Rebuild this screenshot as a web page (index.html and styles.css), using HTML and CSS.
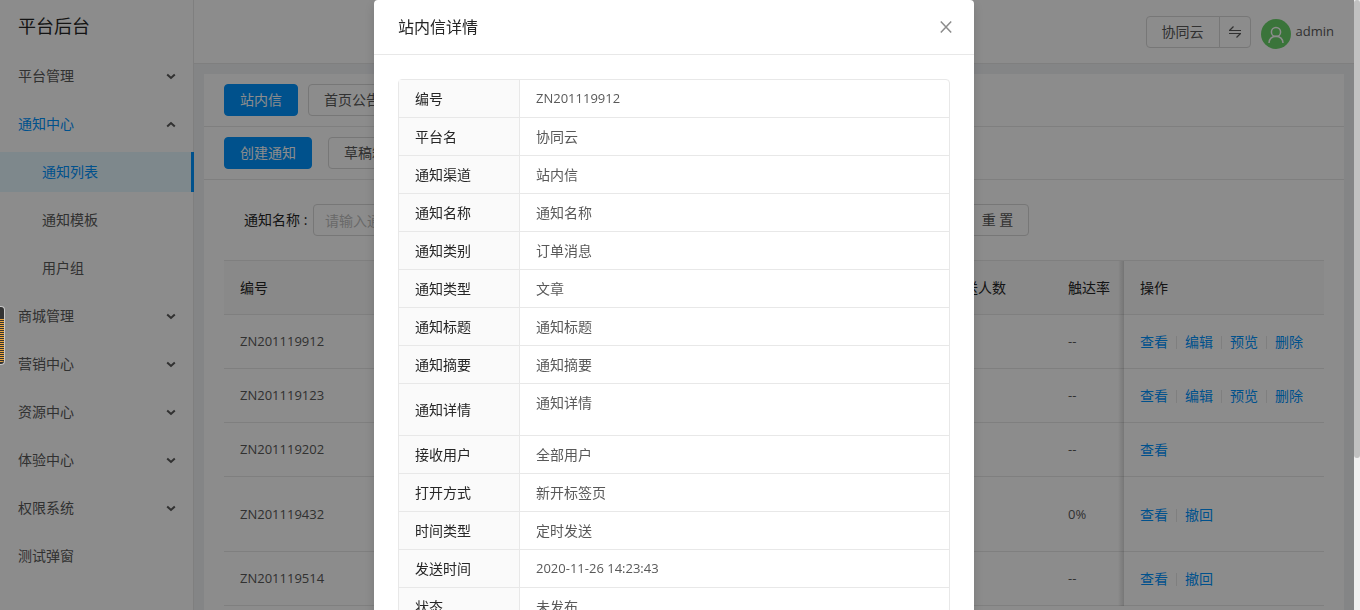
FILE: index.html
```html
<!DOCTYPE html>
<html lang="zh-CN">
<head>
  <meta charset="UTF-8" />
  <meta name="viewport" content="width=device-width, initial-scale=1" />
  <title>平台后台 - 通知列表</title>
  <link rel="stylesheet" href="styles.css">
</head>
<body>

  <div class="app">
    <aside class="sidebar">
      <h1 class="logo">平台后台</h1>
      <nav class="menu">
        <a class="menu-item" href="#">平台管理<svg class="arrow" viewBox="0 0 10 7"><path d="M1.200 1.500L5 5l3.800-3.500" /></svg></a>
        <a class="menu-item open" href="#">通知中心<svg class="arrow up" viewBox="0 0 10 7"><path d="M1.200 1.500L5 5l3.800-3.500" /></svg></a>
        <a class="menu-item sub selected" href="#">通知列表</a>
        <a class="menu-item sub" href="#">通知模板</a>
        <a class="menu-item sub" href="#">用户组</a>
        <a class="menu-item" href="#">商城管理<svg class="arrow" viewBox="0 0 10 7"><path d="M1.200 1.500L5 5l3.800-3.500" /></svg></a>
        <a class="menu-item" href="#">营销中心<svg class="arrow" viewBox="0 0 10 7"><path d="M1.200 1.500L5 5l3.800-3.500" /></svg></a>
        <a class="menu-item" href="#">资源中心<svg class="arrow" viewBox="0 0 10 7"><path d="M1.200 1.500L5 5l3.800-3.500" /></svg></a>
        <a class="menu-item" href="#">体验中心<svg class="arrow" viewBox="0 0 10 7"><path d="M1.200 1.500L5 5l3.800-3.500" /></svg></a>
        <a class="menu-item" href="#">权限系统<svg class="arrow" viewBox="0 0 10 7"><path d="M1.200 1.500L5 5l3.800-3.500" /></svg></a>
        <a class="menu-item" href="#">测试弹窗</a>
      </nav>
    </aside>

    <div class="main">
      <header class="header">
        <div class="btn-group">
          <button class="btn">协同云</button>
          <button class="btn icon-btn" aria-label="切换平台">
            <svg width="14" height="14" viewBox="0 0 14 14"><path d="M1 5.500h12M1.500 5.500l4-4M1 8.500h12M12.500 8.500l-4 4" /></svg>
          </button>
        </div>
        <div class="profile">
          <svg class="avatar" viewBox="0 0 30 30">
            <circle class="avatar-bg" cx="15" cy="15" r="15" />
            <circle cx="15" cy="13" r="4.600" />
            <path d="M8 24c0-4 3-6.800 7-6.800s7 2.800 7 6.800" />
          </svg>
          <span class="latin">admin</span>
        </div>
      </header>

      <div class="panel">
        <div class="toolbar tabs">
          <button class="btn primary">站内信</button>
          <button class="btn">首页公告</button>
        </div>
        <div class="toolbar actions">
          <button class="btn primary">创建通知</button>
          <button class="btn">草稿箱</button>
        </div>

        <form class="filter">
          <div class="field">
            <label for="name">通知名称 :</label>
            <input id="name" type="text" placeholder="请输入通知名称" />
          </div>
          <div class="field">
            <label for="type">通知类型 :</label>
            <select id="type"><option>全部</option></select>
          </div>
          <div class="filter-btns">
            <button class="btn primary" type="button">查 询</button>
            <button class="btn" type="reset">重 置</button>
          </div>
        </form>

        <table class="list">
          <colgroup>
            <col class="col-id"><col><col class="col-count"><col class="col-rate"><col class="col-ops">
          </colgroup>
          <thead>
            <tr><th>编号</th><th></th><th>发送人数</th><th>触达率</th><th class="fixed">操作</th></tr>
          </thead>
          <tbody>
            <tr>
              <td class="latin">ZN201119912</td><td></td><td></td><td class="latin">--</td>
              <td class="fixed"><a href="#">查看</a><a href="#">编辑</a><a href="#">预览</a><a href="#">删除</a></td>
            </tr>
            <tr>
              <td class="latin">ZN201119123</td><td></td><td></td><td class="latin">--</td>
              <td class="fixed"><a href="#">查看</a><a href="#">编辑</a><a href="#">预览</a><a href="#">删除</a></td>
            </tr>
            <tr>
              <td class="latin">ZN201119202</td><td></td><td></td><td class="latin">--</td>
              <td class="fixed"><a href="#">查看</a></td>
            </tr>
            <tr class="two-lines">
              <td class="latin">ZN201119432</td><td></td><td></td><td class="latin">0%</td>
              <td class="fixed"><a href="#">查看</a><a href="#">撤回</a></td>
            </tr>
            <tr>
              <td class="latin">ZN201119514</td><td></td><td></td><td class="latin">--</td>
              <td class="fixed"><a href="#">查看</a><a href="#">撤回</a></td>
            </tr>
          </tbody>
        </table>
      </div>
    </div>
  </div>

  <div class="mask"></div>

  <div class="modal-wrap">
    <div class="modal" role="dialog" aria-labelledby="modalTitle">
      <div class="modal-header">
        <h2 id="modalTitle">站内信详情</h2>
        <button class="close" aria-label="关闭">
          <svg width="12" height="12" viewBox="0 0 12 12"><path d="M.800.500l10.400 11M11.200.500L.800 11.500" /></svg>
        </button>
      </div>
      <div class="modal-body">
        <table class="detail">
          <tr><th>编号</th><td class="latin">ZN201119912</td></tr>
          <tr><th>平台名</th><td>协同云</td></tr>
          <tr><th>通知渠道</th><td>站内信</td></tr>
          <tr><th>通知名称</th><td>通知名称</td></tr>
          <tr><th>通知类别</th><td>订单消息</td></tr>
          <tr><th>通知类型</th><td>文章</td></tr>
          <tr><th>通知标题</th><td>通知标题</td></tr>
          <tr><th>通知摘要</th><td>通知摘要</td></tr>
          <tr><th>通知详情</th><td><p>通知详情</p></td></tr>
          <tr><th>接收用户</th><td>全部用户</td></tr>
          <tr><th>打开方式</th><td>新开标签页</td></tr>
          <tr><th>时间类型</th><td>定时发送</td></tr>
          <tr><th>发送时间</th><td class="latin">2020-11-26 14:23:43</td></tr>
          <tr><th>状态</th><td>未发布</td></tr>
        </table>
      </div>
    </div>
  </div>

  <div class="scrollbar"><div class="thumb"></div></div>
  <div class="side-widget"></div>

</body>
</html>
```
FILE: styles.css
```css
* {
  box-sizing: border-box;
  margin: 0;
  padding: 0;
}
body {
  font-family: "Open Sans", "Noto Sans CJK SC", sans-serif;
  font-size: 14px;
  line-height: 21px;
  color: #595959;
  background: #f0f2f5;
  overflow: hidden;
}
a {
  color: #0094ff;
  text-decoration: none;
}
button,
input,
select {
  font: inherit;
  color: inherit;
}
/* latin glyphs run wide next to the chinese ones */
.latin {
  font-size: 13px;
}

/* layout */
.app {
  display: flex;
  height: 100vh;
  overflow: hidden;
  padding-right: 6px;
}
.sidebar {
  width: 194px;
  flex-shrink: 0;
  background: #fff;
  border-right: 1px solid #e8e8e8;
}
.logo {
  height: 56px;
  padding-left: 18px;
  font-size: 18px;
  font-weight: 400;
  line-height: 52px;
  color: #262626;
}
.menu-item {
  display: flex;
  align-items: center;
  justify-content: space-between;
  height: 40px;
  margin-bottom: 8px;
  padding: 0 17px 0 18px;
  line-height: 20px;
  color: #595959;
}
.menu-item.open {
  color: #0094ff;
}
.menu-item.sub {
  padding-left: 42px;
}
.menu-item.selected {
  color: #0094ff;
  background: #e6f7ff;
  border-right: 3px solid #0094ff;
  margin-right: -1px;
}
.arrow {
  width: 10px;
  height: 7px;
  fill: none;
  stroke: #595959;
  stroke-width: 2;
}
.arrow.up {
  transform: rotate(180deg);
}

.main {
  flex: 1;
  min-width: 0;
}
.header {
  display: flex;
  align-items: center;
  justify-content: flex-end;
  gap: 10px;
  height: 64px;
  padding: 0 20px;
  background: #fff;
  border-bottom: 1px solid #e8e8e8;
}
.profile {
  display: flex;
  align-items: center;
  gap: 5px;
}
.avatar {
  flex-shrink: 0;
  width: 30px;
  height: 30px;
  margin-top: 4px;
  fill: none;
  stroke: #fff;
  stroke-width: 1.5;
}
.avatar-bg {
  fill: #6bd36b;
  stroke: none;
}

/* buttons */
.btn {
  height: 32px;
  padding: 0 15px;
  border: 1px solid #d9d9d9;
  border-radius: 4px;
  background: #fff;
  line-height: 20px;
  white-space: nowrap;
  cursor: pointer;
}
.btn.primary {
  color: #fff;
  background: #0094ff;
  border-color: #0094ff;
}
.btn-group {
  display: flex;
}
.btn-group .btn:first-child {
  border-radius: 4px 0 0 4px;
}
.btn-group .btn:last-child {
  margin-left: -1px;
  border-radius: 0 4px 4px 0;
}
.icon-btn {
  display: flex;
  align-items: center;
  padding: 0 8px;
}
.icon-btn svg {
  fill: none;
  stroke: #595959;
  stroke-width: 1.2;
}

/* list page */
.panel {
  margin: 10px 10px 0;
  padding-bottom: 20px;
  background: #fff;
}
.toolbar {
  display: flex;
  padding: 10px 20px;
  border-bottom: 1px solid #e8e8e8;
}
.tabs {
  gap: 10px;
}
.actions {
  gap: 16px;
}
.filter {
  display: flex;
  gap: 24px;
  padding: 24px 40px;
}
.field {
  display: flex;
  align-items: center;
}
.field label {
  width: 69px;
  line-height: 20px;
  color: #262626;
  white-space: nowrap;
}
.field input,
.field select {
  width: 232px;
  height: 32px;
  padding: 0 11px;
  border: 1px solid #d9d9d9;
  border-radius: 4px;
  background: #fff;
}
.field input::placeholder {
  color: #bfbfbf;
}
.filter-btns {
  display: flex;
  gap: 8px;
}
.list {
  width: calc(100% - 40px);
  margin: 0 20px;
  table-layout: fixed;
  border-collapse: separate;
  border-spacing: 0;
}
.col-id {
  width: 180px;
}
.col-count {
  width: 118px;
}
.col-rate {
  width: 72px;
}
.col-ops {
  width: 200px;
}
.list th,
.list td {
  padding: 16px;
  line-height: 21px;
  text-align: left;
  white-space: nowrap;
  border-bottom: 1px solid #e8e8e8;
}
.list th {
  font-weight: 400;
  color: #262626;
  background: #fafafa;
  border-top: 1px solid #e8e8e8;
}
.list .two-lines td {
  height: 75px;
}
.list .fixed {
  position: relative;
}
.list .fixed::before {
  content: "";
  position: absolute;
  top: 0;
  bottom: -1px;
  right: 100%;
  width: 6px;
  background: linear-gradient(to left, rgba(0, 0, 0, 0.15), transparent);
}
.fixed a + a {
  margin-left: 8px;
  padding-left: 9px;
  background: linear-gradient(#e8e8e8, #e8e8e8) 0 4px / 1px 13px no-repeat;
}

/* modal */
.mask {
  position: fixed;
  inset: 0;
  background: rgba(0, 0, 0, 0.45);
}
.modal-wrap {
  position: fixed;
  inset: 0;
  padding-right: 12px;
  overflow: hidden;
}
.modal {
  width: 600px;
  margin: 0 auto;
  background: #fff;
  border-radius: 4px;
  box-shadow: 0 4px 12px rgba(0, 0, 0, 0.15);
}
.modal-header {
  display: flex;
  align-items: center;
  justify-content: space-between;
  height: 55px;
  padding: 0 22px 0 24px;
  border-bottom: 1px solid #e8e8e8;
}
.modal-header h2 {
  font-size: 16px;
  font-weight: 400;
  line-height: 22px;
  color: #262626;
}
.close {
  display: flex;
  border: none;
  background: none;
  cursor: pointer;
}
.close svg {
  fill: none;
  stroke: #8c8c8c;
  stroke-width: 1.5;
}
.modal-body {
  padding: 24px;
}
.detail {
  width: 100%;
  border: 1px solid #e8e8e8;
  border-radius: 4px;
  border-collapse: separate;
  border-spacing: 0;
}
.detail th,
.detail td {
  padding: 8px 16px;
  line-height: 21px;
  text-align: left;
  border-bottom: 1px solid #e8e8e8;
}
.detail th {
  width: 121px;
  font-weight: 400;
  color: #262626;
  background: #fafafa;
  border-right: 1px solid #e8e8e8;
}
.detail tr:last-child th,
.detail tr:last-child td {
  border-bottom: none;
}
.detail p {
  margin-bottom: 14px;
}

/* thin scrollbar and side handle */
.scrollbar {
  position: fixed;
  top: 0;
  right: 0;
  bottom: 0;
  width: 6px;
  background: #f1f1f1;
}
.thumb {
  height: 75%;
  border-radius: 3px;
  background: #c1c1c1;
}
.side-widget {
  position: fixed;
  top: 306px;
  left: 0;
  width: 5px;
  height: 59px;
  padding: 12px 0 2px;
  border: 1px solid #c8c8c8;
  border-left: none;
  border-radius: 0 4px 4px 0;
  background: repeating-linear-gradient(#e8a33d 0 1px, #333 1px 2px) content-box, #333;
}
```
